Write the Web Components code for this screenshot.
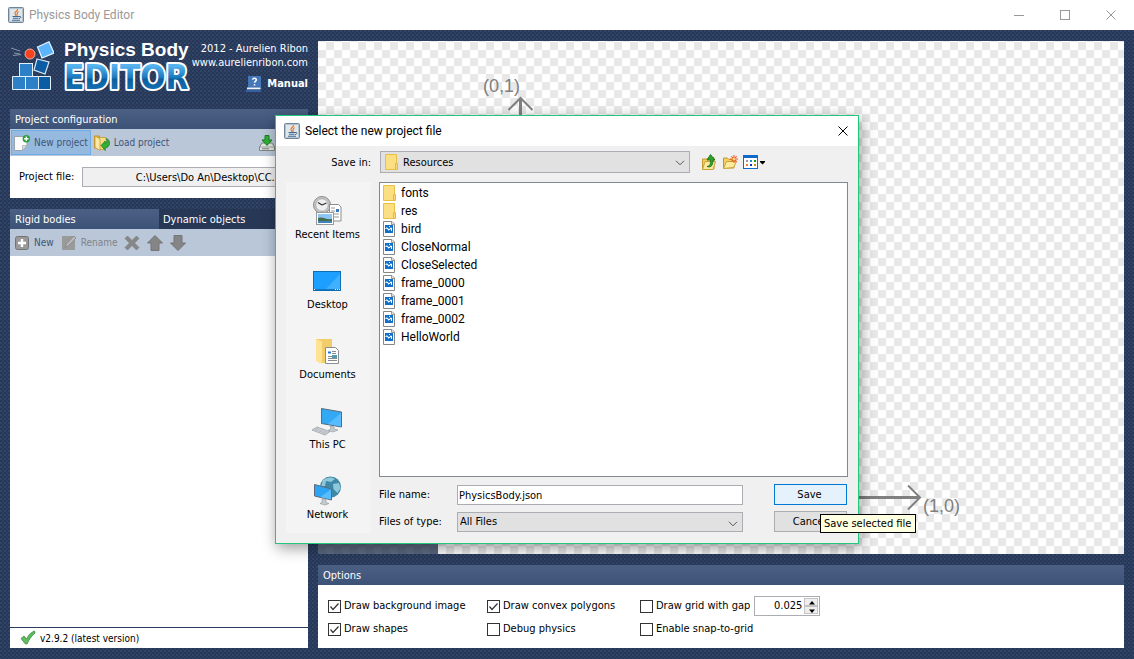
<!DOCTYPE html>
<html lang="en">
<head>
<meta charset="utf-8">
<title>Physics Body Editor</title>
<style>
  html, body { margin: 0; height: 100%; }
  body { font: 11px/14px "DejaVu Sans Condensed", "DejaVu Sans", sans-serif; color: #000; overflow: hidden; }
</style>
</head>
<body>
<physics-app></physics-app>
<script>
const define = (name, html, setup) => {
  const tpl = document.createElement('template');
  tpl.innerHTML = html;
  customElements.define(name, class extends HTMLElement {
    constructor() {
      super();
      this.attachShadow({ mode: 'open' }).append(tpl.content.cloneNode(true));
    }
    connectedCallback() { if (setup) setup(this, this.shadowRoot); }
  });
};

/* Icon set: name -> [width, height, svg content] */
const ICONS = {
  java: [16, 16, `<rect x=".5" y=".5" width="15" height="15" rx="1" fill="#dfe6ec" stroke="#6f8496"/><rect x="1.5" y="1.5" width="13" height="13" fill="none" stroke="#b5c3cf"/><path d="M9.5 2C10 4 6.500 4.500 7 6.500 7.200 7.500 8 8 8 9M10.500 4.500C8.500 5.500 9.500 7 9 8.500" fill="none" stroke="#e8761e" stroke-width="1.200"/><path d="M4.500 9.500h6.500M5 11.200h5.500M4 13.300h8" stroke="#3f6a92" stroke-width="1.100"/><path d="M11 9.500c2.500-.8 2.500 1.800 0 2" fill="none" stroke="#3f6a92"/>`],
  min: [11, 11, `<path d="M0 5.500h10" stroke="#999"/>`],
  max: [11, 11, `<rect x=".5" y=".5" width="9" height="9" fill="none" stroke="#999"/>`],
  close: [11, 11, `<path d="M.5.5l9 9M9.500.5l-9 9" stroke="currentColor"/>`],
  help: [16, 16, `<path d="M2 0h13v11H2z" fill="#4577b8"/><path d="M2 11h13l1 2H1z" fill="#2c5a9c"/><path d="M1 11.500h13.500v2H1z" fill="#f4f6fa"/><path d="M0 13.500h15V16H0z" fill="#355f9f"/><path d="M6.500 3.600C7 1.800 10.500 1.800 10.300 4c-.1 1.300-1.800 1.400-1.800 2.800M8.500 8v1.500" fill="none" stroke="#fff" stroke-width="1.500"/>`],
  newdoc: [16, 16, `<path d="M.5 1.500h12.500v9L8.500 15.500H.5z" fill="#fcfcfc" stroke="#9aa3ad"/><path d="M8.500 15.500v-5h4.500z" fill="#dadde0" stroke="#a5a9ad" stroke-width=".7"/><circle cx="12.300" cy="3.700" r="3.700" fill="#27a23a"/><path d="M12.300 1.500v4.400M10.100 3.700h4.400" stroke="#fff" stroke-width="1.400"/>`],
  load: [16, 16, `<path d="M.5 1h5v12h-5z" fill="#e8b93e" stroke="#b98a1e" stroke-width=".8"/><path d="M5 2.500h7v10l-3 2H5z" fill="#f7dc82" stroke="#c79a31" stroke-width=".8"/><path d="M1 1l5 3v11.500l-5-3z" fill="#fbe8a4" stroke="#c79a31" stroke-width=".8"/><path d="M7 10.500l4.200-4.500v2.500C13 8 13.500 6 12.500 3.500c4 1.500 4.500 8.500-1.300 9.500v2.500z" fill="#35b035" stroke="#15791c" stroke-width=".7"/>`],
  tray: [16, 16, `<path d="M3 8h10l2.500 4v3.500H.5V12z" fill="#e4e8e4" stroke="#7c847c"/><path d="M1 12h14" stroke="#9aa09a"/><path d="M3 13.800h7" stroke="#777"/><path d="M6 .5h4V5h3L8 10.500 3 5h3z" fill="#2fae38" stroke="#14801e"/>`],
  plus: [16, 16, `<rect x="1.500" y="1.500" width="13" height="13" rx="2" fill="#999" stroke="#747474"/><path d="M8 4v8M4 8h8" stroke="#fff" stroke-width="2.400"/>`],
  rename: [16, 16, `<rect x="1" y="1" width="13" height="14" rx="1" fill="#9a9a9a"/><path d="M15 3L7.500 10.500l-3.500 2L5.500 9 13 1z" fill="#bcbcbc" stroke="#858585" stroke-width=".8"/>`],
  cross: [16, 16, `<path d="M3.500 1L8 5.500 12.500 1 15 3.500 10.500 8l4.500 4.500-2.500 2.500L8 10.500 3.500 15 1 12.500 5.500 8 1 3.500z" fill="#878787" stroke="#777" stroke-width=".6"/>`],
  up: [16, 16, `<path d="M8 .5L15.500 8H12v7.500H4V8H.5z" fill="#858585" stroke="#757575"/>`],
  down: [16, 16, `<path d="M8 15.500L15.500 8H12V.5H4V8H.5z" fill="#858585" stroke="#757575"/>`],
  folder: [16, 16, `<path d="M1.500.5h11v15h-11z" fill="#fddf83" stroke="#e9bf45"/><path d="M11.500 9.500h2v6h-2z" fill="#fbd873" stroke="#e5b93c"/>`],
  picture: [16, 16, `<path d="M1.500.5H10L12.500 3v12.500h-11z" fill="#fff" stroke="#868686"/><path d="M9.500.5V3.500h3" fill="#ddd" stroke="#999"/><rect x="3" y="4" width="8" height="8" fill="#0f6fc9"/><path d="M4 8V7h1.500v1h1v1.500M7.500 9V8h1V7h1v3M7 5.500h1" fill="none" stroke="#fff"/>`],
  recent: [32, 32, `<circle cx="10" cy="10" r="8.500" fill="#c9c9c9" stroke="#8b8b8b"/><circle cx="10" cy="10" r="6.300" fill="#efefef" stroke="#a8a8a8"/><path d="M10 10L6 7.500M10 10l4.500-2" stroke="#333" stroke-width="1.300"/><path d="M17.500 9.500h9l2.500 2.500v14H17.500z" fill="#fff" stroke="#8e8e8e"/><path d="M19 13h4M19 16h4M19 19h8M19 22h8" stroke="#999"/><path d="M24 14h3v3h-3z" fill="#3a78c0"/><rect x="4.500" y="17.500" width="17" height="12" fill="#fff" stroke="#999"/><rect x="6" y="19" width="14" height="9" fill="#8fc5f2"/><path d="M6 23c4-2 8 2 14 1v2H6z" fill="#456c50"/><path d="M6 26h14v2H6z" fill="#3f85bc"/>`],
  desktop: [32, 32, `<rect x="1.500" y="6.500" width="27" height="19" fill="#1c9fff" stroke="#0e6db3"/><path d="M13 25L28 9v16z" fill="#41b0ff"/><path d="M2 24.500h26" stroke="#0b78c8"/><path d="M2 24.500h1M23 24.500h1M25 24.500h1M27 24.500h1" stroke="#fff"/>`],
  documents: [32, 32, `<path d="M4 4h16v24H7z" fill="#f3cd6b"/><path d="M4 4l6 2.500V29l-6-3z" fill="#ffe393"/><path d="M13.500 12.500h10l3 3v13h-13z" fill="#fff" stroke="#8a8f94"/><path d="M16 17.500h3" stroke="#2878c8" stroke-width="2"/><path d="M20 16.500h4M20 18.500h4M16 21.500h9M16 23.500h9M16 25.500h9" stroke="#8a8a8a"/><path d="M20 20h5v3h-5z" fill="#59a"/>`],
  pc: [32, 32, `<path d="M9.500 3.500l20 3.500v15l-20-3.500z" fill="#33a8f5" stroke="#5a6a78"/><path d="M16 19L29 8v13.500z" fill="#56bcff"/><path d="M18 21l4 1v2l4 1-5 2-5-1.500 3-1.500z" fill="#c6cbd0" stroke="#8d9499" stroke-width=".6"/><path d="M0 25l5-3 13 4.500-5 3.500z" fill="#d2d6d9" stroke="#9ba1a6" stroke-width=".8"/><path d="M2.500 24.500l12 4M4 23.500l12 4M6 23l-3 3M10 24.500l-3 3M14 26l-3 3" stroke="#aab0b5" stroke-width=".6"/>`],
  network: [32, 32, `<circle cx="18.500" cy="12" r="10.500" fill="#3f88a8"/><path d="M11 5c4-3 9-3.500 12-1l-4 3-5-1-1 5-4 1zM21 9l6-1 1.500 5-3 5-4-4z" fill="#8fc9dc"/><path d="M2.500 9.500l17 4.500v11l-17-4z" fill="#2ea4f4" stroke="#5a6a78"/><path d="M8 22l11-7.500v10z" fill="#58bdff"/><path d="M10 23.500l4 1v3l3 1-4 1.500-5-1.500 2-1z" fill="#c6cbd0" stroke="#8d9499" stroke-width=".6"/>`],
  upfolder: [16, 16, `<path d="M1.500 5h5l1-1.500H13V15H1.500z" fill="#f3cf62" stroke="#c19a2b"/><path d="M1.500 15.500l2.500-8h10.500l-2.500 8z" fill="#fdec9f" stroke="#c9a33a"/><path d="M6 12.500c3.500-.5 3.500-3 3.500-6.500H6L9.500.5l4.500 5.500H12c0 5-1.500 8-6 6.500z" fill="#2fa12f" stroke="#186f18" stroke-width=".8"/>`],
  newfolder: [16, 16, `<path d="M1.500 4h4l1.500 1.500h5V14H1.500z" fill="#f3cf62" stroke="#c19a2b"/><path d="M1.500 14.500l3-7h10l-3 6z" fill="#fdec9f" stroke="#c9a33a"/><path d="M12 1v8M8 5h8M9.300 2.300l5.400 5.400M14.700 2.300L9.300 7.700" stroke="#ee5a22" stroke-width="1.100"/><circle cx="12" cy="5" r="1.500" fill="#ffd27a"/>`],
  views: [22, 16, `<rect x=".5" y="1.500" width="14" height="13" fill="#fff" stroke="#0f6bc9"/><path d="M0 1h15v3H0z" fill="#0f6bc9"/><path d="M3 6h2v2H3z" fill="#99a"/><path d="M7 6h2v2H7z" fill="#28c"/><path d="M11 6h2v2h-2z" fill="#191"/><path d="M3 10h2v2H3z" fill="#f73"/><path d="M7 10h2v2H7z" fill="#13a"/><path d="M11 10h2v2h-2z" fill="#b91"/><path d="M17 7h5v1l-2.500 2.500L17 8z" fill="#000"/>`],
  check: [16, 16, `<path d="M1 8.500L4 6l2.500 3C8.500 5 11 2.500 14.500 1l.5 2C11.500 6 9 9.500 7 14H5.500z" fill="#62bb5e" stroke="#358c3b" stroke-width=".8"/>`],
  chevron: [10, 6, `<path d="M1 .8l4 4 4-4" fill="none" stroke="#555"/>`],
  logo: [44, 52, `<path d="M1 7l9 3M4 12l6 1M3 14.500l8-1" stroke="#8794a8" stroke-width="1"/><circle cx="20" cy="13" r="5" fill="#f5421f" stroke="#ffc8b8" stroke-width=".8"/><path d="M27.500 6L39 .8 44 12 32 17z" fill="#5cb4fb" stroke="#eaf6ff" stroke-width="1.200"/><path d="M27 18l12 3-4 12-11-4z" fill="#0c5ca4" stroke="#d6e6f4" stroke-width="1.200"/><rect x="9.500" y="22.500" width="13" height="13" fill="#2b80c8" stroke="#e3f0fa"/><path d="M2.500 35.500h13v13h-13zM15.500 35.500h13v13h-13z" fill="#2b80c8" stroke="#e3f0fa"/><path d="M28.500 35.500h12v13h-12z" fill="#0c5ca4" stroke="#e3f0fa"/>`],
  spinup: [14, 8, `<path d="M4 5.500h6L7 2z" fill="#000"/>`],
  spindown: [14, 8, `<path d="M4 2.500h6L7 6z" fill="#000"/>`],
};
define('ui-icon', `<style>:host{display:block;flex:none;line-height:0}svg{display:block}</style><div></div>`, (el, root) => {
  const [w, h, body] = ICONS[el.getAttribute('name')];
  root.querySelector('div').innerHTML = `<svg width="${w}" height="${h}" viewBox="0 0 ${w} ${h}" aria-hidden="true">${body}</svg>`;
});

define('tool-button', `
<style>
  :host { display: block; color: #3f5579; font-size: 10px; }
  button { display: flex; align-items: center; gap: 4px; height: 25px; padding: 0 2px; border: 1px solid transparent; background: none; font: inherit; color: inherit; white-space: nowrap; }
  .text { padding-top: 1px; }
  :host([active]) button { background: #96badf; border-color: #6eade6; }
  :host([disabled]) { color: #808489; }
  :host([bare]) button { gap: 0; }
</style>
<button type="button"><slot name="icon"></slot><span class="text"><slot></slot></span></button>`);

define('titled-panel', `
<style>
  :host { display: flex; flex-direction: column; }
  h2 { margin: 0; height: 20px; padding: 0 5px; font: inherit; line-height: 21px; color: #fff; background: linear-gradient(#4b6084, #3d5277); }
  .body { background: #fff; }
</style>
<h2><slot name="title"></slot></h2>
<div class="body"><slot></slot></div>`);

define('check-option', `
<style>
  :host { display: block; }
  label { display: flex; align-items: center; gap: 3px; height: 20px; white-space: nowrap; }
  input { appearance: none; width: 13px; height: 13px; margin: 0; border: 1px solid #333; background: #fff; }
  input:checked { background: #fff url("data:image/svg+xml,%3Csvg xmlns='http://www.w3.org/2000/svg' width='11' height='11'%3E%3Cpath d='M1.500 5.500l2.500 3L9.500 2.500' fill='none' stroke='%23333' stroke-width='1.200'/%3E%3C/svg%3E"); }
</style>
<label><input type="checkbox"><span><slot></slot></span></label>`, (el, root) => {
  root.querySelector('input').checked = el.hasAttribute('checked');
});

define('number-spinner', `
<style>
  :host { display: flex; box-sizing: border-box; width: 66px; height: 20px; border: 1px solid #abadb3; background: #fff; padding: 1px; }
  input { flex: 1; min-width: 0; border: 0; padding: 0 2px 0 0; font: inherit; text-align: right; background: none; }
  div { display: flex; flex-direction: column; }
  button { flex: 1; width: 14px; padding: 0; border: 1px solid #c4c4c4; background: #eee; display: grid; place-items: center; overflow: hidden; }
</style>
<input type="text" value="0.025" aria-label="Grid gap">
<div><button type="button" aria-label="Increase"><ui-icon name="spinup"></ui-icon></button><button type="button" aria-label="Decrease"><ui-icon name="spindown"></ui-icon></button></div>`);

define('window-title', `
<style>
  :host { display: flex; align-items: center; gap: 5px; height: 30px; padding: 0 17px 0 8px; background: #fff; color: #999; font: 12px/16px Roboto, "Open Sans", sans-serif; }
  h1 { flex: 1; margin: 0; font: inherit; }
  nav { display: flex; gap: 35px; }
  button { display: grid; border: 0; padding: 0; background: none; color: #999; }
</style>
<ui-icon name="java"></ui-icon><h1><slot></slot></h1>
<nav><button type="button" aria-label="Minimize"><ui-icon name="min"></ui-icon></button><button type="button" aria-label="Maximize"><ui-icon name="max"></ui-icon></button><button type="button" aria-label="Close"><ui-icon name="close"></ui-icon></button></nav>`);

define('app-banner', `
<style>
  :host { display: flex; height: 68px; color: #fff; }
  .name { flex: 1; padding-left: 10px; }
  .name b { display: block; font: bold 19px/18px "Liberation Sans", sans-serif; white-space: nowrap; }
  svg { display: block; overflow: visible; }
  .name text { font: bold 33px "DejaVu Sans Condensed", sans-serif; fill: url(#ink); stroke: #fff; stroke-width: 4px; paint-order: stroke; stroke-linejoin: round; }
  .info { text-align: right; white-space: nowrap; padding-top: 1px; }
  a { color: inherit; text-decoration: none; display: block; }
  .manual { display: flex; justify-content: flex-end; align-items: center; gap: 5px; font-weight: bold; margin-top: 6px; }
</style>
<ui-icon name="logo"></ui-icon>
<div class="name"><b>Physics Body</b>
<svg width="124" height="32"><defs><linearGradient id="ink" x1="0" y1="0" x2="0" y2="1"><stop offset=".2" stop-color="#58b4ee"/><stop offset=".5" stop-color="#1a78bd"/><stop offset=".55" stop-color="#0b5f9f"/><stop offset="1" stop-color="#1a7cc0"/></linearGradient></defs><text x="0" y="30">EDITOR</text></svg></div>
<div class="info"><div>2012 - Aurelien Ribon</div><a href="#site">www.aurelienribon.com</a><a class="manual" href="#manual"><ui-icon name="help"></ui-icon>Manual</a></div>`);

define('project-config', `
<style>
  :host { display: block; }
  .bar { display: flex; align-items: center; height: 27px; padding: 0 33px 0 1px; background: #b9c7d8; }
  .bar > ui-icon { margin-left: auto; }
  .row { display: flex; align-items: center; gap: 8px; height: 42px; padding: 0 10px 0 9px; }
  input { flex: 1; min-width: 0; box-sizing: border-box; height: 20px; border: 1px solid #abadb3; background: #f0f0f0; padding: 0 16px 0 4px; text-align: right; font: inherit; }
</style>
<titled-panel><span slot="title">Project configuration</span>
<div class="bar"><tool-button active><ui-icon slot="icon" name="newdoc"></ui-icon>New project</tool-button><tool-button><ui-icon slot="icon" name="load"></ui-icon>Load project</tool-button><ui-icon name="tray"></ui-icon></div>
<div class="row"><label for="file">Project file:</label><input id="file" type="text" readonly value="C:\\Users\\Do An\\Desktop\\CC..."></div>
</titled-panel>`);

define('bodies-panel', `
<style>
  :host { display: flex; flex-direction: column; background: #fff; }
  .tabs { display: grid; grid-template-columns: 1fr 1fr; background: #273857; }
  .tabs button { height: 20px; border: 0; padding: 1px 4px 0; text-align: left; font: inherit; color: #fff; background: none; }
  .tabs button:first-child { padding-left: 5px; background: linear-gradient(#4b6084, #3d5277); }
  .bar { display: flex; align-items: center; gap: 1px; height: 27px; padding: 0 1px; background: #b9c7d8; }
  .space { flex: 1; }
  footer { display: flex; align-items: center; gap: 4px; height: 20px; padding: 0 10px; border-top: 1px solid #2a3c5b; font-size: 10px; }
  footer span { padding-top: 1px; }
</style>
<div class="tabs" role="tablist"><button role="tab" type="button">Rigid bodies</button><button role="tab" type="button">Dynamic objects</button></div>
<div class="bar"><tool-button><ui-icon slot="icon" name="plus"></ui-icon>New</tool-button><tool-button disabled><ui-icon slot="icon" name="rename"></ui-icon>Rename</tool-button><tool-button bare><ui-icon slot="icon" name="cross"></ui-icon></tool-button><tool-button bare><ui-icon slot="icon" name="up"></ui-icon></tool-button><tool-button bare><ui-icon slot="icon" name="down"></ui-icon></tool-button></div>
<div class="space"></div>
<footer><ui-icon name="check"></ui-icon><span>v2.9.2 (latest version)</span></footer>`);

define('body-canvas', `
<style>
  :host { display: block; position: relative; overflow: hidden; color: #808080; font: 18px/20px "Liberation Sans", sans-serif;
    background: conic-gradient(#e8e8e8 25%, #fff 0 50%, #e8e8e8 0 75%, #fff 0) left bottom / 16px 16px; }
  svg { position: absolute; left: 190px; bottom: 44px; }
  span { position: absolute; }
  .y { left: 165px; bottom: 458px; }
  .x { left: 605px; bottom: 38px; }
  .hud { position: absolute; left: 0; bottom: 0; width: 120px; height: 60px; background: rgba(42, 60, 91, .75); }
</style>
<svg width="416" height="416" viewBox="0 0 416 416" fill="none" stroke="#808080" stroke-width="3" aria-hidden="true"><path d="M12.500 403.500V4M12.500 403.500H411"/><path d="M.5 16L12.500 4l12 12M400 391.500l12 12-12 12" stroke-width="2"/></svg>
<span class="y">(0,1)</span><span class="x">(1,0)</span><div class="hud"></div>`);

define('options-panel', `
<style>
  :host { display: block; }
  .grid { display: grid; grid-template-columns: 159px 153px max-content; align-content: center; row-gap: 3px; height: 61px; padding: 2px 0 0 10px; }
  .gap { display: flex; gap: 4px; }
</style>
<titled-panel><span slot="title">Options</span>
<div class="grid">
<check-option checked>Draw background image</check-option><check-option checked>Draw convex polygons</check-option><div class="gap"><check-option>Draw grid with gap</check-option><number-spinner></number-spinner></div>
<check-option checked>Draw shapes</check-option><check-option>Debug physics</check-option><check-option>Enable snap-to-grid</check-option>
</div></titled-panel>`);

define('place-button', `
<style>
  :host { display: block; }
  button { display: flex; flex-direction: column; align-items: center; gap: 1px; width: 100%; height: 70px; padding: 13px 2px 0 0; border: 0; background: none; font: inherit; color: inherit; }
</style>
<button type="button"><slot name="icon"></slot><span><slot></slot></span></button>`);

define('file-row', `
<style>
  :host { display: flex; align-items: center; gap: 3px; height: 18px; }
</style>
<slot name="icon"></slot><span><slot></slot></span>`);

define('save-dialog', `
<style>
  :host { display: block; position: relative; box-sizing: border-box; width: 584px; border: 1px solid #22c67c; background: #f0f0f0; box-shadow: 2px 4px 14px rgba(0, 0, 0, .4); }
  header { display: flex; align-items: center; gap: 5px; height: 30px; padding: 0 9px 0 8px; background: #fff; }
  header h2 { flex: 1; margin: 0; font: 12px/16px Roboto, "Open Sans", sans-serif; }
  button { font: inherit; }
  header button, .look button { display: grid; border: 0; padding: 0; background: none; color: #000; }
  .main { display: grid; grid-template-columns: 85px 1fr; column-gap: 8px; row-gap: 9px; padding: 5px 10px 10px; }
  .main > label { justify-self: end; line-height: 23px; height: 22px; }
  .look { display: flex; align-items: center; gap: 5px; padding-left: 1px; }
  .select { position: relative; display: block; }
  .look .select { width: 310px; margin-right: 6px; }
  select { appearance: none; box-sizing: border-box; display: block; width: 100%; height: 20px; border: 1px solid #abadb3; border-radius: 0; background: #e1e1e1; color: #000; font: inherit; padding: 1px 20px 0 2px; }
  .look select { height: 22px; padding-left: 22px; }
  .select ui-icon[name=folder] { position: absolute; left: 4px; top: 3px; }
  .select ui-icon[name=chevron] { position: absolute; right: 5px; top: 9px; }
  .places { background: #f4f4f4; height: 351px; }
  .files { display: flex; flex-direction: column; }
  .list { box-sizing: border-box; height: 295px; border: 1px solid #828790; background: #fff; padding: 1px 2px; font: 12px/16px Roboto, "Open Sans", sans-serif; }
  .form { display: grid; grid-template-columns: 78px 286px 104px; row-gap: 6px; margin-top: 7px; align-items: center; }
  .form .action { margin-left: 31px; width: 73px; height: 21px; border: 1px solid #adadad; background: #e1e1e1; padding: 0 2px 0 0; color: #000; }
  .form .primary { border-color: #0078d7; background: #e5f1fb; }
  input { box-sizing: border-box; width: 100%; height: 20px; border: 1px solid #abadb3; padding: 1px 1px 0; font: inherit; }
  .tip { position: absolute; left: 544px; top: 398px; padding: 1px 4px 1px 3px; border: 1px solid #000; background: #ffffe1; white-space: nowrap; line-height: 15px; }
</style>
<header><ui-icon name="java"></ui-icon><h2>Select the new project file</h2><button type="button" aria-label="Close"><ui-icon name="close"></ui-icon></button></header>
<div class="main">
  <label for="where">Save in:</label>
  <div class="look"><span class="select"><select id="where"><option>Resources</option></select><ui-icon name="folder"></ui-icon><ui-icon name="chevron"></ui-icon></span><button type="button" aria-label="Up one level"><ui-icon name="upfolder"></ui-icon></button><button type="button" aria-label="Create new folder"><ui-icon name="newfolder"></ui-icon></button><button type="button" aria-label="View menu"><ui-icon name="views"></ui-icon></button></div>
  <div class="places"><place-button><ui-icon slot="icon" name="recent"></ui-icon>Recent Items</place-button><place-button><ui-icon slot="icon" name="desktop"></ui-icon>Desktop</place-button><place-button><ui-icon slot="icon" name="documents"></ui-icon>Documents</place-button><place-button><ui-icon slot="icon" name="pc"></ui-icon>This PC</place-button><place-button><ui-icon slot="icon" name="network"></ui-icon>Network</place-button></div>
  <div class="files">
    <div class="list"></div>
    <div class="form">
      <label for="name">File name:</label><input id="name" type="text" value="PhysicsBody.json"><button type="button" class="action primary">Save</button>
      <label for="type">Files of type:</label><span class="select"><select id="type"><option>All Files</option></select><ui-icon name="chevron"></ui-icon></span><button type="button" class="action">Cancel</button>
    </div>
  </div>
</div>
<div class="tip" role="tooltip">Save selected file</div>`, (el, root) => {
  const files = [['folder', 'fonts'], ['folder', 'res'], ...['bird', 'CloseNormal', 'CloseSelected', 'frame_0000', 'frame_0001', 'frame_0002', 'HelloWorld'].map(n => ['picture', n])];
  root.querySelector('.list').innerHTML = files.map(([icon, name]) => `<file-row><ui-icon slot="icon" name="${icon}"></ui-icon>${name}</file-row>`).join('');
});

define('physics-app', `
<style>
  :host { display: flex; flex-direction: column; position: relative; height: 100vh; }
  main { flex: 1; min-height: 0; display: grid; grid-template-columns: 298px 1fr; gap: 10px; padding: 11px 10px;
    background: radial-gradient(circle at 1px 1px, #31456a 1px, transparent 0) 0 0 / 4px 4px, radial-gradient(circle at 3px 3px, #2d4064 1px, transparent 0) 0 0 / 4px 4px, #273857; }
  .col { display: flex; flex-direction: column; min-height: 0; }
  bodies-panel { flex: 1; margin-top: 11px; }
  body-canvas { flex: 1; margin-bottom: 11px; }
  .overlay { position: absolute; inset: 0; display: grid; place-items: center; }
</style>
<window-title>Physics Body Editor</window-title>
<main>
  <div class="col"><app-banner></app-banner><project-config></project-config><bodies-panel></bodies-panel></div>
  <div class="col"><body-canvas></body-canvas><options-panel></options-panel></div>
</main>
<div class="overlay"><save-dialog></save-dialog></div>`);
</script>
</body>
</html>
